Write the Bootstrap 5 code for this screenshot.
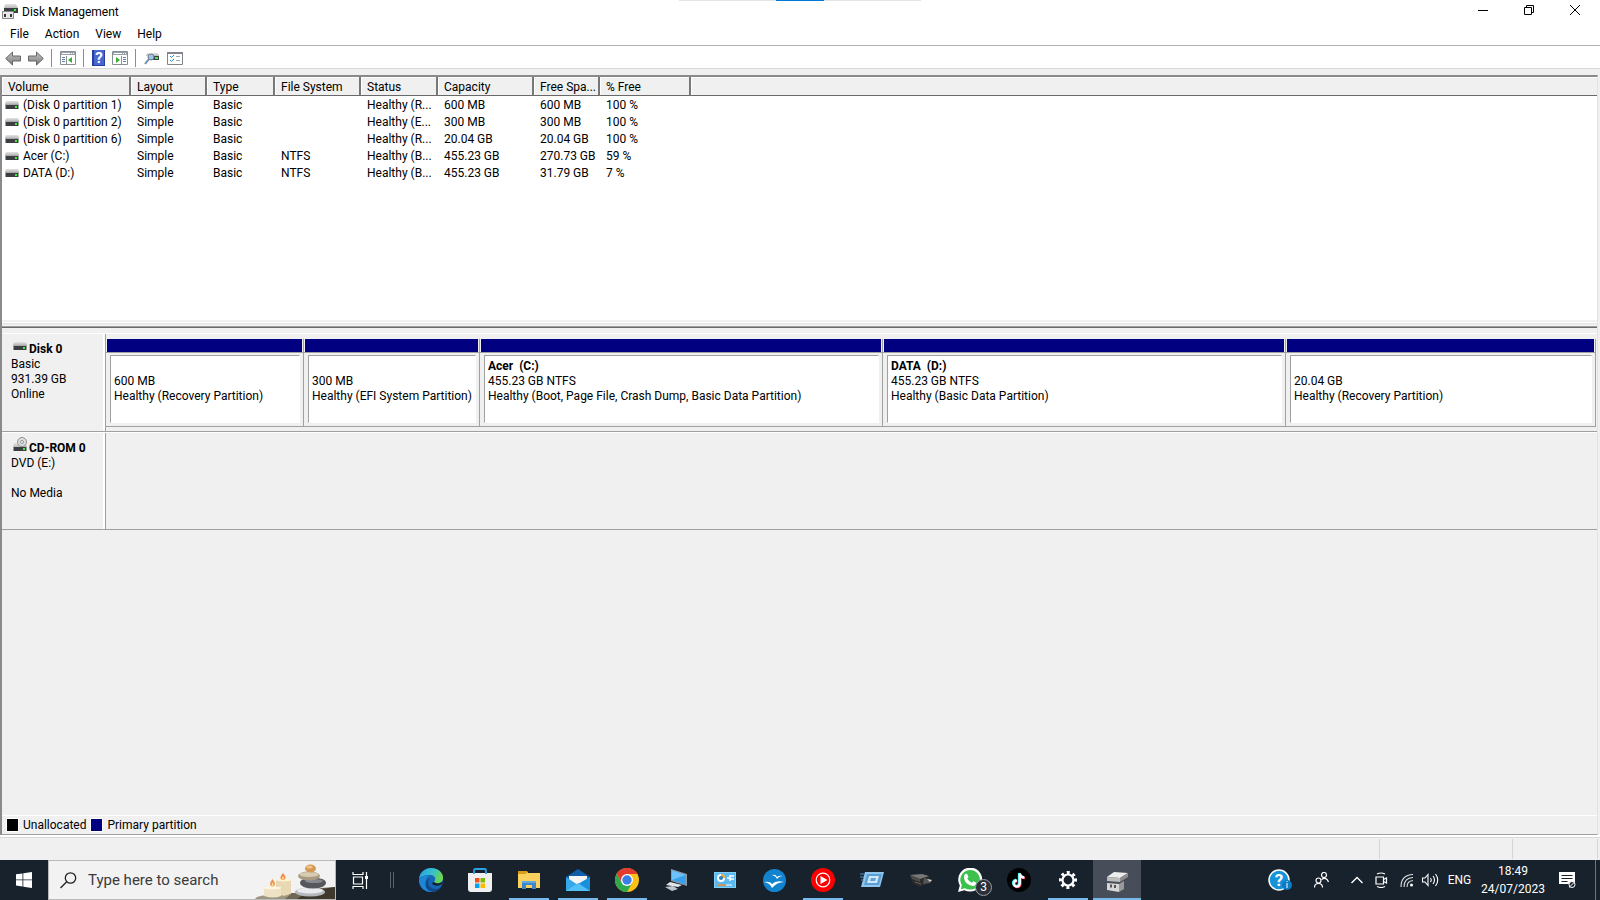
<!DOCTYPE html>
<html lang="en">
<head>
<meta charset="utf-8">
<meta name="viewport" content="width=device-width, initial-scale=1">
<title>Disk Management</title>
<link href="https://cdn.jsdelivr.net/npm/bootstrap@5.3.0/dist/css/bootstrap.min.css" rel="stylesheet">
<style>
  body { font-family: Roboto, "Open Sans", sans-serif; font-size: 12px; line-height: 15px; color: #000; background: #fff; }
  button { font: inherit; color: inherit; background: none; border: 0; padding: 0; }
  svg { display: block; flex: none; }
  .title-bar { height: 23px; padding: 1px 2px 0 2px; }
  .snap-strip { top: 0; left: 0; right: 0; height: 1px; }
  .snap-strip i { width: 97px; background: #e5e5e5; }
  .snap-strip i.mid { width: 48px; background: #0078d7; }
  .win-btn { width: 46px; height: 18px; }
  .menu-row { height: 22px; padding-left: 2px; }
  .menu-row button { padding: 0 8px; }
  .tool-row { height: 24px; padding: 2px 0 0 5px; border-top: 1px solid #b0b0b4; border-bottom: 1px solid #d7d7d7; }
  .tool-row button { margin-right: 7px; }
  .tool-sep { width: 1px; height: 18px; background: #8d8d8d; margin-right: 8px; }
  .work-area { background: #f0f0f0; padding: 6px 2px 0 0; }
  .frame { border: 2px solid #696969; border-color: #8a8a8a #e3e3e3 #a0a0a0 #8a8a8a; border-right-width: 1px; border-bottom-width: 1px; }
  .vol-pane { flex: 0 0 243px; background: #fff; }
  .vol-table { table-layout: fixed; width: 100%; border-collapse: separate; border-spacing: 0; }
  .vol-table th { height: 19px; padding: 2px 0 0 6px; font-weight: 400; background: #f0f0f0; border-right: 2px solid #777; border-bottom: 1px solid #696969; box-shadow: inset 1px 1px 0 #fff; white-space: nowrap; }
  .vol-table th:last-child { border-right: 0; }
  .vol-table td { height: 17px; padding: 1px 0 0 6px; white-space: nowrap; }
  .vol-table td:first-child { padding-left: 3px; }
  .splitter { flex: 0 0 14px; background: linear-gradient(#f0f0f0 2px, #fff 2px 3px, #e3e3e3 3px 4px, #f0f0f0 4px 6px, #a0a0a0 6px 7px, #696969 7px 8px, #f0f0f0 8px 13px, #fff 13px); }
  .disk-row { height: 98px; }
  .disk-head { width: 104px; padding: 8px 0 0 9px; border-right: 1px solid #a0a0a0; border-bottom: 1px solid #a0a0a0; box-shadow: inset -2px 0 0 #fff; }
  .disk-head svg { margin: 0 2px; }
  .disk-body { border-bottom: 1px solid #a0a0a0; }
  .disk-parts { display: grid; grid-template-columns: 198fr 176fr 403fr 403fr 310fr; height: 93px; padding: 5px 1px 0 0; }
  .part { min-width: 0; border-right: 1px solid #a0a0a0; border-bottom: 1px solid #a0a0a0; }
  .part-bar { height: 13px; margin: 0 1px; background: #000080; }
  .part-body { height: 74px; border-top: 1px solid #a0a0a0; padding: 2px 3px 3px 4px; }
  .part-body > div { height: 100%; padding: 3px 0 0 3px; background: #fff; border: 1px solid #a0a0a0; border-right-color: #fff; border-bottom-color: #fff; overflow: hidden; white-space: nowrap; }
  .legend-row { height: 19px; border-top: 1px solid #fff; padding-left: 5px; gap: 5px; }
  .swatch { width: 11px; height: 12px; outline: 1px solid #fff; background: #000; }
  .swatch.primary { background: #000080; }
  .status-row { height: 23px; background: #f0f0f0; border-top: 1px solid #d9d9d9; box-shadow: 0 -2px 0 #fff; margin-top: 2px; }
  .status-row span { border-left: 1px solid #d5d5d5; margin-top: 1px; height: 20px; }
  .taskbar { height: 40px; background: #18222d; color: #fff; }
  .task-btn { width: 48px; height: 40px; display: flex; align-items: center; justify-content: center; position: relative; flex: none; }
  .task-btn.running { background: linear-gradient(#76b9ed, #76b9ed) center bottom / 40px 2px no-repeat; }
  .task-btn.current { background: linear-gradient(#76b9ed, #76b9ed) center bottom / 48px 2px no-repeat #474d59; }
  .search-box { width: 288px; background: #f2f2f2; border: 1px solid #b9b9b9; padding-left: 11px; }
  .search-box input { width: 160px; margin-left: 11px; font-size: 15px; border: 0; background: none; padding: 0; color: #333; outline: 0; }
  .search-box input::placeholder { color: #3a3a3a; opacity: 1; }
  .app-list { column-gap: 1px; margin-left: -1px; }
  .count { left: 29px; top: 19px; width: 17px; height: 17px; border: 1px solid #9a9fa5; border-radius: 50%; background: #2a3038; line-height: 15px; }
  .tray-wide { margin-left: 22px; }
  .lang { width: 41px; }
  .clock { width: 66px; line-height: 18px; }
  .notify { margin-left: 13px; }
  .show-desk { width: 5px; height: 40px; margin-left: 19px; border-left: 1px solid #6d747c; }
</style>
</head>
<body class="d-flex flex-column min-vh-100">

<svg width="0" height="0" class="position-absolute" aria-hidden="true">
  <defs>
    <linearGradient id="lid" x1="0" y1="0" x2="0" y2="1"><stop offset="0" stop-color="#e4e4e4"/><stop offset="1" stop-color="#b9b9b9"/></linearGradient>
    <linearGradient id="arrowFill" x1="0" y1="0" x2="0" y2="1"><stop offset="0" stop-color="#c4c4c4"/><stop offset="1" stop-color="#7c7c7c"/></linearGradient>
    <linearGradient id="edgeA" x1="0" y1="0" x2="1" y2=".3"><stop offset="0" stop-color="#2a9fe0"/><stop offset=".6" stop-color="#35c1d0"/><stop offset="1" stop-color="#6bd64f"/></linearGradient>
    <symbol id="drive" viewBox="0 0 14 8"><path d="M1 0h12l1 3H0z" fill="url(#lid)"/><path d="M0 3h14v1H0z" fill="#aaa"/><path d="M.5 4h13v4H.5z" fill="#3b3f42"/><path d="M10 5h2v2h-2z" fill="#3df03d"/></symbol>
  </defs>
</svg>

<header class="position-relative">
  <div class="snap-strip position-absolute d-flex justify-content-center"><i></i><i class="mid"></i><i></i></div>
  <div class="title-bar d-flex align-items-center">
    <svg width="16" height="16" viewBox="0 0 16 16"><path d="M3 0h11l2 4H2z" fill="url(#lid)"/><path d="M2 4h14v5H2z" fill="#3b3f42"/><path d="M12 5h2v2h-2z" fill="#3df03d"/><path d="M.5 7.500h11v7H.5z" fill="#e8e8e8" stroke="#888"/><path d="M2 10h2v3H2zM8 10h2v3H8z" fill="#333"/></svg>
    <span class="ms-1">Disk Management</span>
    <div class="ms-auto d-flex align-self-start">
      <button class="win-btn" aria-label="Minimize"><svg class="mx-auto" width="10" height="10" viewBox="0 0 10 10"><path d="M0 5.500h10" stroke="#000"/></svg></button>
      <button class="win-btn" aria-label="Restore"><svg class="mx-auto" width="10" height="10" viewBox="0 0 10 10" fill="none" stroke="#000"><path d="M.5 2.500h7v7h-7zM2.500 2.500v-2h7v7h-2"/></svg></button>
      <button class="win-btn" aria-label="Close"><svg class="mx-auto" width="10" height="10" viewBox="0 0 10 10"><path d="M0 0l10 10M10 0L0 10" stroke="#000"/></svg></button>
    </div>
  </div>
  <nav class="menu-row d-flex align-items-center">
    <button>File</button><button>Action</button><button>View</button><button>Help</button>
  </nav>
  <div class="tool-row d-flex align-items-center">
    <button aria-label="Back"><svg width="16" height="15" viewBox="0 0 16 15"><path d="M.7 7.500L7.500 1v4h8v5h-8v4z" fill="url(#arrowFill)" stroke="#666"/></svg></button>
    <button aria-label="Forward"><svg width="16" height="15" viewBox="0 0 16 15"><path d="M15.300 7.500L8.500 1v4h-8v5h8v4z" fill="url(#arrowFill)" stroke="#666"/></svg></button>
    <span class="tool-sep"></span>
    <button aria-label="Show console tree"><svg width="16" height="14" viewBox="0 0 16 14"><path d="M.5.5h15v13H.5z" fill="#fff" stroke="#8a8f96"/><path d="M1 1h14v3H1z" fill="#9aa0a8"/><path d="M2 2.500h8M11 2.500h1M13 2.500h1" stroke="#fff"/><path d="M6.500 5v8" stroke="#8a8f96"/><path d="M2 6.500h3M2 8.500h3M2 10.500h3" stroke="#5c81ad"/><path d="M12 6v6L8 9z" fill="#3cae31"/></svg></button>
    <span class="tool-sep"></span>
    <button aria-label="Help topics"><svg width="13" height="16" viewBox="0 0 13 16"><path d="M0 0h13v16H0z" fill="#233f9f"/><path d="M2 0h10v15H2z" fill="#4868cf"/><text x="7" y="13" text-anchor="middle" font-size="15" font-weight="700" fill="#fff">?</text></svg></button>
    <button aria-label="Show action pane"><svg width="16" height="14" viewBox="0 0 16 14"><path d="M.5.5h15v13H.5z" fill="#fff" stroke="#8a8f96"/><path d="M1 1h14v3H1z" fill="#9aa0a8"/><path d="M2 2.500h8M11 2.500h1M13 2.500h1" stroke="#fff"/><path d="M9.500 5v8" stroke="#8a8f96"/><path d="M11 6.500h3M11 8.500h3M11 10.500h3" stroke="#5c81ad"/><path d="M4 6v6l4-3z" fill="#3cae31"/></svg></button>
    <span class="tool-sep"></span>
    <button aria-label="Rescan disks"><svg width="16" height="14" viewBox="0 0 16 14"><path d="M3 2h11l1 3H2z" fill="url(#lid)"/><path d="M4 5h11v4H4z" fill="#3b3f42"/><path d="M11 6h3v2h-3z" fill="#3df03d"/><path d="M5 8l-4 5" stroke="#6d8aa8" stroke-width="2"/><circle cx="7" cy="6" r="3" fill="#9cc5e8" stroke="#6d7c8c"/></svg></button>
    <button aria-label="Settings"><svg width="16" height="13" viewBox="0 0 16 13"><path d="M.5.5h15v12H.5z" fill="#fff" stroke="#80858d"/><path d="M0 0h16v2H0z" fill="#80858d"/><path d="M3 4l1.500 1.500L7 3M3 8l1.500 1.500L7 7" fill="none" stroke="#3485d0"/><path d="M9 4.500h4M9 8.500h4" stroke="#9aa"/></svg></button>
  </div>
</header>

<main class="work-area flex-grow-1 d-flex flex-column">
  <div class="frame flex-grow-1 d-flex flex-column">
    <section class="vol-pane">
      <table class="vol-table">
        <colgroup><col style="width:129px"><col style="width:76px"><col style="width:68px"><col style="width:86px"><col style="width:77px"><col style="width:96px"><col style="width:66px"><col style="width:91px"><col></colgroup>
        <thead><tr><th>Volume</th><th>Layout</th><th>Type</th><th>File System</th><th>Status</th><th>Capacity</th><th>Free Spa...</th><th>% Free</th><th></th></tr></thead>
        <tbody>
          <tr><td><div class="d-flex align-items-center"><svg class="me-1" width="14" height="8"><use href="#drive"/></svg>(Disk 0 partition 1)</div></td><td>Simple</td><td>Basic</td><td></td><td>Healthy (R...</td><td>600 MB</td><td>600 MB</td><td>100 %</td><td></td></tr>
          <tr><td><div class="d-flex align-items-center"><svg class="me-1" width="14" height="8"><use href="#drive"/></svg>(Disk 0 partition 2)</div></td><td>Simple</td><td>Basic</td><td></td><td>Healthy (E...</td><td>300 MB</td><td>300 MB</td><td>100 %</td><td></td></tr>
          <tr><td><div class="d-flex align-items-center"><svg class="me-1" width="14" height="8"><use href="#drive"/></svg>(Disk 0 partition 6)</div></td><td>Simple</td><td>Basic</td><td></td><td>Healthy (R...</td><td>20.04 GB</td><td>20.04 GB</td><td>100 %</td><td></td></tr>
          <tr><td><div class="d-flex align-items-center"><svg class="me-1" width="14" height="8"><use href="#drive"/></svg>Acer (C:)</div></td><td>Simple</td><td>Basic</td><td>NTFS</td><td>Healthy (B...</td><td>455.23 GB</td><td>270.73 GB</td><td>59 %</td><td></td></tr>
          <tr><td><div class="d-flex align-items-center"><svg class="me-1" width="14" height="8"><use href="#drive"/></svg>DATA (D:)</div></td><td>Simple</td><td>Basic</td><td>NTFS</td><td>Healthy (B...</td><td>455.23 GB</td><td>31.79 GB</td><td>7 %</td><td></td></tr>
        </tbody>
      </table>
    </section>
    <div class="splitter"></div>
    <section class="flex-grow-1">
      <div class="disk-row d-flex">
        <div class="disk-head flex-shrink-0">
          <div class="d-flex fw-bold"><svg width="14" height="8"><use href="#drive"/></svg>Disk 0</div>
          <div>Basic</div><div>931.39 GB</div><div>Online</div>
        </div>
        <div class="disk-body flex-grow-1">
          <div class="disk-parts">
            <div class="part"><div class="part-bar"></div><div class="part-body"><div><br>600 MB<br>Healthy (Recovery Partition)</div></div></div>
            <div class="part"><div class="part-bar"></div><div class="part-body"><div><br>300 MB<br>Healthy (EFI System Partition)</div></div></div>
            <div class="part"><div class="part-bar"></div><div class="part-body"><div><b>Acer &nbsp;(C:)</b><br>455.23 GB NTFS<br>Healthy (Boot, Page File, Crash Dump, Basic Data Partition)</div></div></div>
            <div class="part"><div class="part-bar"></div><div class="part-body"><div><b>DATA &nbsp;(D:)</b><br>455.23 GB NTFS<br>Healthy (Basic Data Partition)</div></div></div>
            <div class="part"><div class="part-bar"></div><div class="part-body"><div><br>20.04 GB<br>Healthy (Recovery Partition)</div></div></div>
          </div>
        </div>
      </div>
      <div class="disk-row d-flex border-top border-white">
        <div class="disk-head flex-shrink-0">
          <div class="d-flex fw-bold"><svg width="14" height="15" viewBox="0 4 14 15" overflow="visible"><path d="M1 6h12l1 4H0z" fill="url(#lid)"/><circle cx="9" cy="5" r="4.500" fill="#ddd" stroke="#909090"/><circle cx="9" cy="5" r="1.500" fill="#fff" stroke="#909090"/><path d="M.5 10h13v4H.5z" fill="#3b3f42"/><path d="M10 11h2v2h-2z" fill="#3df03d"/></svg>CD-ROM 0</div>
          <div>DVD (E:)</div><br><div>No Media</div>
        </div>
        <div class="disk-body flex-grow-1"></div>
      </div>
    </section>
    <div class="legend-row d-flex align-items-center">
      <span class="swatch"></span><span>Unallocated</span>
      <span class="swatch primary"></span><span>Primary partition</span>
    </div>
  </div>
</main>

<div class="status-row d-flex justify-content-end"><span style="width:133px"></span><span style="width:85px"></span><span style="width:3px"></span></div>

<footer class="taskbar d-flex">
  <button class="task-btn" aria-label="Start"><svg width="16" height="16" viewBox="0 0 16 16" fill="#fff"><path d="M0 2.300l6.500-.9v6.100H0zM7.300 1.300L16 0v7.500H7.300zM0 8.300h6.500v6.200L0 13.600zM7.300 8.300H16V16l-8.700-1.300z"/></svg></button>
  <div class="search-box d-flex align-items-center">
    <label for="taskSearch" aria-label="Search"><svg width="17" height="17" viewBox="0 0 17 17" fill="none" stroke="#222" stroke-width="1.300"><circle cx="10.500" cy="6" r="5.200"/><path d="M6.700 9.700L.5 16"/></svg></label>
    <input id="taskSearch" type="text" placeholder="Type here to search">
    <svg class="ms-auto align-self-end" width="80" height="37" viewBox="0 0 80 37">
      <path d="M0 37q18-7 40-6l12-4 28-2v12z" fill="#6d6753"/><path d="M42 37l12-8 26-4v12z" fill="#3f392d"/><path d="M2 35q14-4 33-2l-5 4H0z" fill="#9a9682"/>
      <path d="M9 26h17v8q-8 3-17 0z" fill="#eee2c4"/><ellipse cx="17.500" cy="26" rx="8.500" ry="1.500" fill="#fff7dd"/><path d="M21 18h15v14q-8 3-10 1V25h-5z" fill="#e8d8b4"/><ellipse cx="28.500" cy="18" rx="7.500" ry="1.500" fill="#fff3d2"/>
      <path d="M17.500 17q-5 7 0 7.500 5-.5 0-7.500zM28 11q-5 6 0 7 5-1 0-7z" fill="#f08a45"/><path d="M17.500 20q-2 4 0 4 2 0 0-4zM28 14q-2 3 0 3.500 2-.5 0-3.500z" fill="#ffe18d"/>
      <ellipse cx="55" cy="30" rx="15" ry="4.500" fill="#b5b8bd"/><ellipse cx="55" cy="28.500" rx="13" ry="3" fill="#e8eaee"/><ellipse cx="58" cy="21" rx="13" ry="5.500" fill="#55575c"/><ellipse cx="59" cy="19" rx="9" ry="2" fill="#84878d"/><ellipse cx="54" cy="14" rx="11" ry="4.500" fill="#a89b81"/><ellipse cx="54" cy="12.500" rx="9.500" ry="2.500" fill="#d7cbb3"/><ellipse cx="55.500" cy="6.500" rx="5.500" ry="4" fill="#d49a55"/><ellipse cx="54.500" cy="5" rx="3" ry="1.500" fill="#f0c387"/>
    </svg>
  </div>
  <button class="task-btn" aria-label="Task view"><svg width="17" height="17" viewBox="0 0 17 17" fill="none" stroke="#fff" stroke-width="1.200"><path d="M1 0v2.500h10V0M1 17v-2.500h10V17M1.500 5h9v7h-9zM14.500 0v17"/><path d="M13 4h3v3h-3z" fill="#fff" stroke="none"/></svg></button>
  <svg class="align-self-center ms-1" width="20" height="16" viewBox="0 0 20 16"><path d="M2.500 0v16M5.500 0v16" stroke="#59626c"/></svg>
  <div class="app-list d-flex flex-grow-1">
    <button class="task-btn" aria-label="Edge"><svg width="24" height="24" viewBox="0 0 24 24"><circle cx="12" cy="12" r="12" fill="#1667b7"/><path d="M0 11C1 4 6 0 12 0c8 0 13 6 12 11-1 5-8 5-9 3 3-4 0-7-4-7C6 7 2 8 0 11z" fill="url(#edgeA)"/><path d="M11 8c-6 1-7 12 3 16-8 1-14-5-14-12 2-4 6-5 11-4z" fill="#1d86d6"/><path d="M11 10c-4 4-1 11 6 11 2 0 4-1 5-2-3 5-9 6-13 3-4-4-3-10 2-12z" fill="#124a89"/><path d="M23 16c-4 3-9 2-10-1l2-1c2 2 7 2 9-1z" fill="#18222d"/></svg></button>
    <button class="task-btn" aria-label="Microsoft Store"><svg width="24" height="24" viewBox="0 0 24 24"><path d="M0 5h24v16a3 3 0 01-3 3H3a3 3 0 01-3-3z" fill="#efefef"/><path d="M6 6V2.500Q6 1 7.500 1h9Q18 1 18 2.500V6" fill="none" stroke="#29a3e3" stroke-width="1.800"/><path d="M7 10h4.500v4.500H7z" fill="#f25022"/><path d="M12.500 10H17v4.500h-4.500z" fill="#7fba00"/><path d="M7 15.500h4.500V20H7z" fill="#00a4ef"/><path d="M12.500 15.500H17V20h-4.500z" fill="#ffb900"/></svg></button>
    <button class="task-btn running" aria-label="File Explorer"><svg width="22" height="20" viewBox="0 0 22 20"><path d="M0 1h9l1 2h12v15H0z" fill="#fbd05c"/><path d="M0 1h9l-1 3H0z" fill="#d99b1a"/><path d="M4 11h14v8h-4v-4H8v4H4z" fill="#3b86cd"/><path d="M4 11h14v2H4z" fill="#5fa8e4"/></svg></button>
    <button class="task-btn running" aria-label="Mail"><svg width="24" height="24" viewBox="0 0 24 24"><path d="M0 9l12-8 12 8v3H0z" fill="#0e5ea8"/><path d="M3 8h18v8H3z" fill="#f5f5f5"/><path d="M0 9l12 8L24 9v14H0z" fill="#35a7ea"/><path d="M0 23L24 9v14z" fill="#1a8fdb"/><path d="M0 23l12-8 12 8z" fill="#51c0f4"/></svg></button>
    <button class="task-btn running" aria-label="Chrome"><svg width="24" height="24" viewBox="0 0 24 24"><circle cx="12" cy="12" r="12" fill="#fbc116"/><path d="M1.600 6A12 12 0 0122.400 6H12v6l-5 3z" fill="#e33b2e"/><path d="M1.600 6A12 12 0 0012 24l5.200-9L12 12l-5.200 3z" fill="#2da94f"/><circle cx="12" cy="12" r="6" fill="#fff"/><circle cx="12" cy="12" r="4.700" fill="#3a7ee8"/></svg></button>
    <button class="task-btn" aria-label="Remote computer"><svg width="22" height="22" viewBox="0 0 22 22"><path d="M6 0l16 5v12L6 12z" fill="#8f989f"/><path d="M7 1.500L20.500 6v9.500L7 11z" fill="#39a0ec"/><path d="M7 1.500L20.500 6 7 11z" fill="#6cc1fa"/><path d="M5 13l12 3-4 2-12-2z" fill="#e3e6e9"/><path d="M0 18l8-1 5 3-6 2z" fill="#bfc5cb"/></svg></button>
    <button class="task-btn" aria-label="Control Panel"><svg width="22" height="16" viewBox="0 0 22 16"><path d="M0 0h22v16H0z" fill="#7fd0f8"/><path d="M1 1h20v14H1z" fill="#5bb9ee"/><circle cx="7" cy="6" r="4" fill="#fff"/><path d="M7 6V2a4 4 0 014 4z" fill="#f5a623"/><circle cx="7" cy="6" r="2" fill="#2b7fc4"/><path d="M13 6h3m0-3v6m0-5h4m-4 3h4" stroke="#fff" stroke-width="1.400"/><path d="M4 13h7" stroke="#f58b23" stroke-width="1.500"/><path d="M12 13h6" stroke="#fff"/></svg></button>
    <button class="task-btn" aria-label="OpenOffice"><svg width="23" height="23" viewBox="0 0 23 23"><circle cx="11.500" cy="11.500" r="11.500" fill="#1183cf"/><path d="M9 6q4-1 5 2 2-2 6-1-4 0-6 3-1-3-5-4zM1 13q6-1 8 2 4-4 12-2-7 0-12 6-2-5-8-6z" fill="#fff"/></svg></button>
    <button class="task-btn running" aria-label="YouTube Music"><svg width="24" height="24" viewBox="0 0 24 24"><circle cx="12" cy="12" r="12" fill="#f00"/><circle cx="12" cy="12" r="6.800" fill="none" stroke="#fff" stroke-width="1.200"/><path d="M9.500 8l7 4-7 4z" fill="#fff"/></svg></button>
    <button class="task-btn" aria-label="Run"><svg width="24" height="16" viewBox="0 0 24 16"><path d="M5 0h19l-4 15H1z" fill="#8fc6ee"/><path d="M7 2h15l-3 11H4z" fill="#5b9fd4"/><path d="M9 4h10l-2 7H7z" fill="#cfe7f8"/><path d="M11 6h5l-1 3h-5z" fill="#5ea3d8"/><path d="M0 2h5M0 5h4M1 8h3" stroke="#4d92c8"/></svg></button>
    <button class="task-btn" aria-label="Projector"><svg width="22" height="13" viewBox="0 0 22 13"><path d="M0 1l12-1 7 2v7l-9 4-7-3z" fill="#2b2b2b"/><path d="M0 1l12-1 7 2-9 3z" fill="#777"/><path d="M0 1l10 4v3L2 5z" fill="#4c4c4c"/><path d="M14 4l8 2-2 3-7 1z" fill="#555"/><path d="M17 5l5 1-2 2z" fill="#ccc"/><path d="M5 8l6 2" stroke="#666"/></svg></button>
    <button class="task-btn" aria-label="WhatsApp"><svg width="24" height="24" viewBox="0 0 24 24"><path d="M0 24l1.800-6.500A12 12 0 1112 23.600a12 12 0 01-5.700-1.400z" fill="#fff"/><path d="M2.800 21.200l1-4.200a9.800 9.800 0 113.300 3.200z" fill="#3dc14d"/><path d="M7 6l2-.3L10.500 9 9.300 10.500q1.500 3 4.500 4.200l1.500-1.500 3 1.500q0 3-3.500 3.200Q7 17 6 10 6 7 7 6z" fill="#fff"/></svg><span class="count position-absolute">3</span></button>
    <button class="task-btn" aria-label="TikTok"><svg width="24" height="24" viewBox="0 0 24 24"><circle cx="12" cy="12" r="12" fill="#000"/><g fill="none" stroke-width="2.300"><path d="M12 5v10a3 3 0 11-3-3M12 5q.5 4 4.500 4" stroke="#25f4ee"/><path d="M13.500 6v10a3 3 0 11-3-3M13.500 6q.5 4 4.500 4" stroke="#fe2c55"/><path d="M12.800 5.500v10a3 3 0 11-3-3M12.800 5.500q.5 4 4.500 4" stroke="#fff"/></g></svg></button>
    <button class="task-btn running" aria-label="Settings"><svg width="18" height="18" viewBox="0 0 18 18" fill="none" stroke="#fff"><circle cx="9" cy="9" r="5.500" stroke-width="2.200"/><circle cx="9" cy="9" r="7.500" stroke-width="3" stroke-dasharray="2.900 2.990" transform="rotate(-11 9 9)"/></svg></button>
    <button class="task-btn current" aria-label="Disk Management"><svg class="mt-1" width="22" height="21" viewBox="0 0 22 21"><path d="M8 0l14 1-8 5L1 5z" fill="#ededed"/><path d="M1 5l13 1v4L1 9z" fill="#bdbdbd"/><path d="M14 6l8-5v4l-8 5z" fill="#8d8d8d"/><path d="M1 11l12 1v8L1 18z" fill="#d6d6d6"/><path d="M13 12l5-3v8l-5 3z" fill="#9a9a9a"/><path d="M4 12.500h2v3H4zM8 13h2v3H8z" fill="#555"/></svg></button>
  </div>
  <div class="d-flex align-items-center">
    <button aria-label="Get help"><svg width="24" height="22" viewBox="0 0 24 22"><circle cx="11" cy="11" r="10" fill="#1493d8" stroke="#fff" stroke-width="1.500"/><text x="11" y="17" text-anchor="middle" font-size="17" font-weight="700" fill="#fff">?</text><circle cx="19" cy="16" r="5" fill="#0c7cc4"/><path d="M19 14v5M19 12v1" stroke="#fff"/></svg></button>
    <button class="tray-wide" aria-label="People"><svg width="15" height="16" viewBox="0 0 15 16" fill="none" stroke="#fff" stroke-width="1.200"><circle cx="10" cy="3" r="2.500"/><path d="M7.500 7.500q5-3 7 2.500"/><circle cx="4.500" cy="8.500" r="2.500"/><path d="M.5 15.500q0-4 4-4t4 4"/></svg></button>
    <button class="tray-wide" aria-label="Show hidden icons"><svg width="12" height="8" viewBox="0 0 12 8"><path d="M.5 7L6 1.500 11.500 7" fill="none" stroke="#fff" stroke-width="1.400"/></svg></button>
    <button class="ms-2 ps-1" aria-label="Meet now"><svg width="13" height="16" viewBox="0 0 13 16" fill="none" stroke="#fff" stroke-width="1.200"><path d="M1 5h7.500v7H1zM8.500 7.500L11.500 6v5L8.500 9.500M2 2q4-2 8 0M2 14.500q4 2 8 0"/></svg></button>
    <button class="ms-2 ps-1" aria-label="Network"><svg width="14" height="14" viewBox="0 0 14 14" fill="none" stroke="#ddd" stroke-width="1.100"><path d="M1 14Q1 2 13 1.500M4 14Q4 5 13 4.500M7 14q0-6 6-6.500"/><circle cx="11.500" cy="12" r="1.500" fill="#fff" stroke="none"/></svg></button>
    <button class="ms-2" aria-label="Volume"><svg width="17" height="14" viewBox="0 0 17 14" fill="none" stroke="#fff" stroke-width="1.100"><path d="M.5 5h2.500l3-3.500v11L3 9H.5zM8.500 5q1.500 2 0 4M11 3q3 4 0 8M13.500 1q4.500 6 0 12"/></svg></button>
    <button class="lang">ENG</button>
    <button class="clock text-center">18:49<br>24/07/2023</button>
    <button class="notify" aria-label="Notifications"><svg width="17" height="17" viewBox="0 0 17 17"><path d="M0 0h16v12h-2l-4 4v-4H0z" fill="#fff"/><path d="M2.500 3.500h11M2.500 6.500h11M2.500 9.500h6" stroke="#18222d"/><circle cx="13" cy="12.500" r="3" fill="#18222d" stroke="#fff"/><path d="M11 14.500l4-4" stroke="#fff"/></svg></button>
    <span class="show-desk"></span>
  </div>
</footer>
<script src="https://cdn.jsdelivr.net/npm/bootstrap@5.3.0/dist/js/bootstrap.bundle.min.js"></script>
</body>
</html>
